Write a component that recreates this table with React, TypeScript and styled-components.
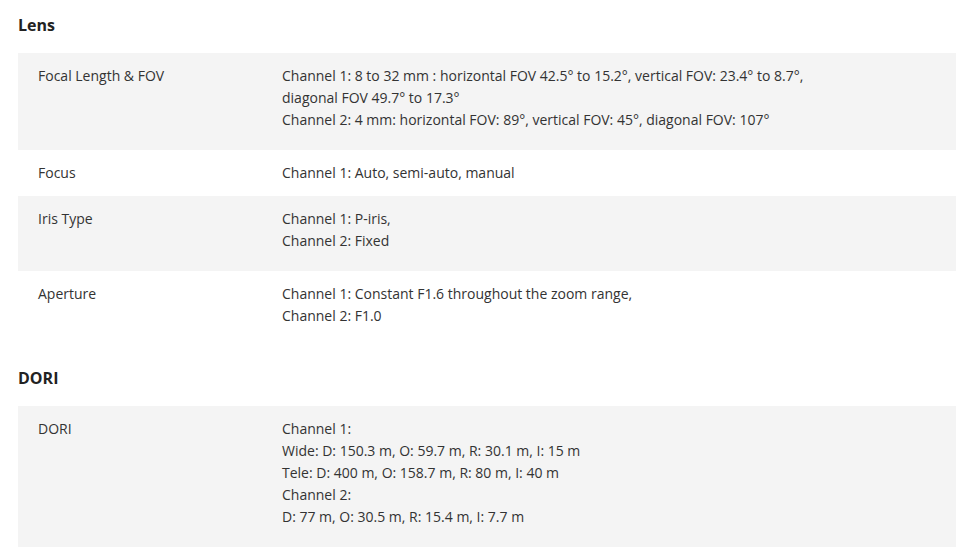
import React from "react";
import styled, { createGlobalStyle } from "styled-components";

const Global = createGlobalStyle`
  html, body { margin: 0; padding: 0; background: #fff; }
  body { font-family: "Open Sans", "Liberation Sans", sans-serif; color: #333; }
`;

const Page = styled.div`
  padding: 14px 20px 0 18px;
  width: 976px;
  box-sizing: border-box;
`;

const Section = styled.section`
  & + & { margin-top: 21px; }
`;

const Heading = styled.h2`
  margin: 0 0 17px 0;
  font-size: 16px;
  line-height: 22px;
  font-weight: 700;
  color: #222;
`;

const Row = styled.div<{ $shaded: boolean; $bottom: number }>`
  display: grid;
  grid-template-columns: 264px 1fr;
  background: ${(p) => (p.$shaded ? "#f4f4f4" : "#fff")};
  padding: 12px 0 ${(p) => p.$bottom}px 0;
`;

const Label = styled.div`
  padding-left: 20px;
  font-size: 14px;
  line-height: 22px;
  color: #333;
`;

const Value = styled.div`
  font-size: 14px;
  line-height: 22px;
  color: #333;
`;

const Line = styled.div``;

type Spec = { label: string; lines: string[] };

const lens: Spec[] = [
  {
    label: "Focal Length & FOV",
    lines: [
      "Channel 1: 8 to 32 mm : horizontal FOV 42.5° to 15.2°, vertical FOV: 23.4° to 8.7°,",
      "diagonal FOV 49.7° to 17.3°",
      "Channel 2: 4 mm: horizontal FOV: 89°, vertical FOV: 45°, diagonal FOV: 107°",
    ],
  },
  { label: "Focus", lines: ["Channel 1: Auto, semi-auto, manual"] },
  { label: "Iris Type", lines: ["Channel 1: P-iris,", "Channel 2: Fixed"] },
  {
    label: "Aperture",
    lines: ["Channel 1: Constant F1.6 throughout the zoom range,", "Channel 2: F1.0"],
  },
];

const dori: Spec[] = [
  {
    label: "DORI",
    lines: [
      "Channel 1:",
      "Wide: D: 150.3 m, O: 59.7 m, R: 30.1 m, I: 15 m",
      "Tele: D: 400 m, O: 158.7 m, R: 80 m, I: 40 m",
      "Channel 2:",
      "D: 77 m, O: 30.5 m, R: 15.4 m, I: 7.7 m",
    ],
  },
];

const Table = ({ rows }: { rows: Spec[] }) => (
  <div>
    {rows.map((r, i) => (
      <Row key={r.label} $shaded={i % 2 === 0} $bottom={r.lines.length > 1 ? 19 : 12}>
        <Label>{r.label}</Label>
        <Value>
          {r.lines.map((l) => (
            <Line key={l}>{l}</Line>
          ))}
        </Value>
      </Row>
    ))}
  </div>
);

export default function App() {
  return (
    <>
      <Global />
      <Page>
        <Section>
          <Heading>Lens</Heading>
          <Table rows={lens} />
        </Section>
        <Section>
          <Heading>DORI</Heading>
          <Table rows={dori} />
        </Section>
      </Page>
    </>
  );
}
